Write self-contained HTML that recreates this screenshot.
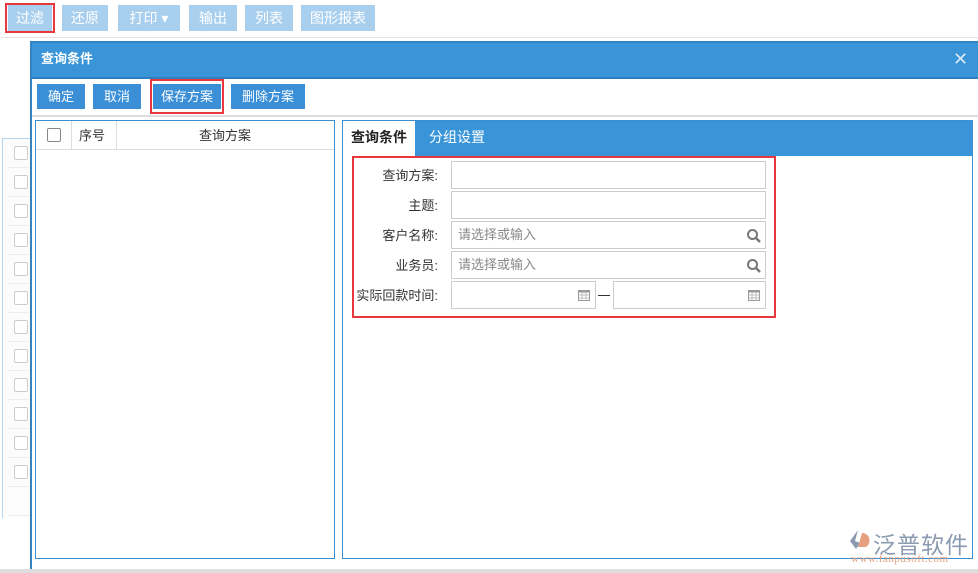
<!DOCTYPE html>
<html><head><meta charset="utf-8"><style>
*{box-sizing:border-box;margin:0;padding:0}
body{width:978px;height:573px;overflow:hidden;background:#fff;font-family:"Liberation Sans","Noto Sans CJK SC",sans-serif;font-size:13px;position:relative;color:#333}
.a{position:absolute}
.tb{position:absolute;top:5px;height:26px;background:#a9cfee;color:#fff;font-size:14px;line-height:26px;text-align:center}
.db{position:absolute;top:84px;height:25px;background:#3a8fd6;color:#fff;font-size:13px;line-height:25px;text-align:center}
.cb{position:absolute;left:14px;width:14px;height:14px;border:1px solid #ccc;border-radius:2px;background:#fff}
.row{position:absolute;left:8px;width:24px;height:1px;background:#eee}
.lb{position:absolute;width:85px;left:353px;text-align:right;font-size:13px;color:#333}
.in{position:absolute;height:28px;border:1px solid #ccc;background:#fff;font-size:13px;color:#888;line-height:26px;padding-left:6px}
</style></head><body>
<div class="a" style="left:0;top:37px;width:978px;height:1px;background:#e4e4e4"></div>
<div class="tb" style="left:8px;width:44px">过滤</div>
<div class="a" style="left:5px;top:3px;width:50px;height:30px;border:2px solid #e8383d"></div>
<div class="tb" style="left:62px;width:46px">还原</div>
<div class="tb" style="left:118px;width:62px">打印 ▾</div>
<div class="tb" style="left:189px;width:48px">输出</div>
<div class="tb" style="left:245px;width:48px">列表</div>
<div class="tb" style="left:301px;width:74px">图形报表</div>
<div class="a" style="left:2px;top:138px;width:30px;height:380px;border-left:1px solid #b7d6ee;border-top:1px solid #b7d6ee;background:#fcfcfc"></div>
<div class="cb" style="top:146px"></div><div class="row" style="top:167px"></div>
<div class="cb" style="top:175px"></div><div class="row" style="top:196px"></div>
<div class="cb" style="top:204px"></div><div class="row" style="top:225px"></div>
<div class="cb" style="top:233px"></div><div class="row" style="top:254px"></div>
<div class="cb" style="top:262px"></div><div class="row" style="top:283px"></div>
<div class="cb" style="top:291px"></div><div class="row" style="top:312px"></div>
<div class="cb" style="top:320px"></div><div class="row" style="top:341px"></div>
<div class="cb" style="top:349px"></div><div class="row" style="top:370px"></div>
<div class="cb" style="top:378px"></div><div class="row" style="top:399px"></div>
<div class="cb" style="top:407px"></div><div class="row" style="top:428px"></div>
<div class="cb" style="top:436px"></div><div class="row" style="top:457px"></div>
<div class="cb" style="top:465px"></div><div class="row" style="top:486px"></div>
<div class="row" style="top:515px"></div>
<!-- dialog -->
<div class="a" style="left:30px;top:41px;width:950px;height:531px;border:2px solid #3484c4;border-right:none;background:#fff"></div>
<div class="a" style="left:32px;top:43px;width:946px;height:34px;background:#3a95d8;color:#fff;font-weight:bold;font-size:13px;line-height:32px;padding-left:9px">查询条件</div>
<div class="a" style="left:953px;top:49px;color:#d8e8f5;font-size:18px">✕</div>
<div class="a" style="left:32px;top:77px;width:946px;height:2px;background:#2f7fc0"></div>
<div class="db" style="left:37px;width:48px">确定</div>
<div class="db" style="left:93px;width:48px">取消</div>
<div class="db" style="left:153px;width:68px">保存方案</div>
<div class="a" style="left:150px;top:79px;width:74px;height:35px;border:2px solid #e8383d"></div>
<div class="db" style="left:231px;width:74px">删除方案</div>
<div class="a" style="left:32px;top:115px;width:946px;height:2px;background:#ddd"></div>
<!-- left panel -->
<div class="a" style="left:35px;top:120px;width:300px;height:439px;border:1px solid #3a8fd0"></div>
<div class="a" style="left:36px;top:149px;width:298px;height:1px;background:#ddd"></div>
<div class="a" style="left:71px;top:121px;width:1px;height:28px;background:#ddd"></div>
<div class="a" style="left:116px;top:121px;width:1px;height:28px;background:#ddd"></div>
<div class="a" style="left:47px;top:128px;width:14px;height:14px;border:1px solid #888;border-radius:2px"></div>
<div class="a" style="left:79px;top:125px">序号</div>
<div class="a" style="left:199px;top:125px">查询方案</div>
<!-- right panel -->
<div class="a" style="left:342px;top:120px;width:631px;height:439px;border:1px solid #3a8fd0"></div>
<div class="a" style="left:343px;top:121px;width:629px;height:35px;background:#3a95d8"></div>
<div class="a" style="left:343px;top:121px;width:72px;height:35px;background:#fff;font-weight:bold;color:#222;font-size:14px;line-height:33px;text-align:center">查询条件</div>
<div class="a" style="left:429px;top:127px;color:#fff;font-size:14px">分组设置</div>
<div class="a" style="left:352px;top:156px;width:424px;height:162px;border:2px solid #e8383d"></div>
<div class="lb" style="top:165px">查询方案:</div>
<div class="lb" style="top:195px">主题:</div>
<div class="lb" style="top:225px">客户名称:</div>
<div class="lb" style="top:255px">业务员:</div>
<div class="lb" style="top:285px">实际回款时间:</div>
<div class="in" style="left:451px;top:161px;width:315px"></div>
<div class="in" style="left:451px;top:191px;width:315px"></div>
<div class="in" style="left:451px;top:221px;width:315px">请选择或输入</div>
<div class="in" style="left:451px;top:251px;width:315px">请选择或输入</div>
<svg class="a" style="left:746px;top:228px" width="16" height="16"><circle cx="6.5" cy="6.5" r="4.5" fill="none" stroke="#777" stroke-width="2"/><line x1="10" y1="10" x2="14" y2="14" stroke="#777" stroke-width="2.5"/></svg>
<svg class="a" style="left:746px;top:258px" width="16" height="16"><circle cx="6.5" cy="6.5" r="4.5" fill="none" stroke="#777" stroke-width="2"/><line x1="10" y1="10" x2="14" y2="14" stroke="#777" stroke-width="2.5"/></svg>
<div class="in" style="left:451px;top:281px;width:145px"></div>
<div class="in" style="left:613px;top:281px;width:153px"></div>
<div class="a" style="left:598px;top:295px;width:12px;height:1px;background:#333"></div>
<svg class="a" style="left:578px;top:289px" width="12" height="12"><rect x="0.5" y="1.5" width="11" height="10" fill="none" stroke="#999"/><rect x="0.5" y="1.5" width="11" height="2" fill="#999"/><path d="M0 6h12M0 9h12M4 3v9M8 3v9" stroke="#aaa" stroke-width=".7"/></svg>
<svg class="a" style="left:748px;top:289px" width="12" height="12"><rect x="0.5" y="1.5" width="11" height="10" fill="none" stroke="#999"/><rect x="0.5" y="1.5" width="11" height="2" fill="#999"/><path d="M0 6h12M0 9h12M4 3v9M8 3v9" stroke="#aaa" stroke-width=".7"/></svg>
<!-- logo -->
<svg class="a" style="left:848px;top:529px" width="24" height="22"><path d="M10 1 L2 12 L8 20 L12 14 L7 12 Z" fill="#8a9ab0"/><path d="M14 4 C22 4 24 14 18 18 L10 18 Z" fill="#e5a07f"/></svg>
<div class="a" style="left:873px;top:526px;font-size:23px;color:#8a9ab0;letter-spacing:1px">泛普软件</div>
<div class="a" style="left:851px;top:553px;font-size:11px;color:#e5a07f;font-family:'Liberation Serif',serif;letter-spacing:0.5px">www.fanpusoft.com</div>
<div class="a" style="left:0;top:569px;width:978px;height:4px;background:#ddd"></div>
</body></html>
